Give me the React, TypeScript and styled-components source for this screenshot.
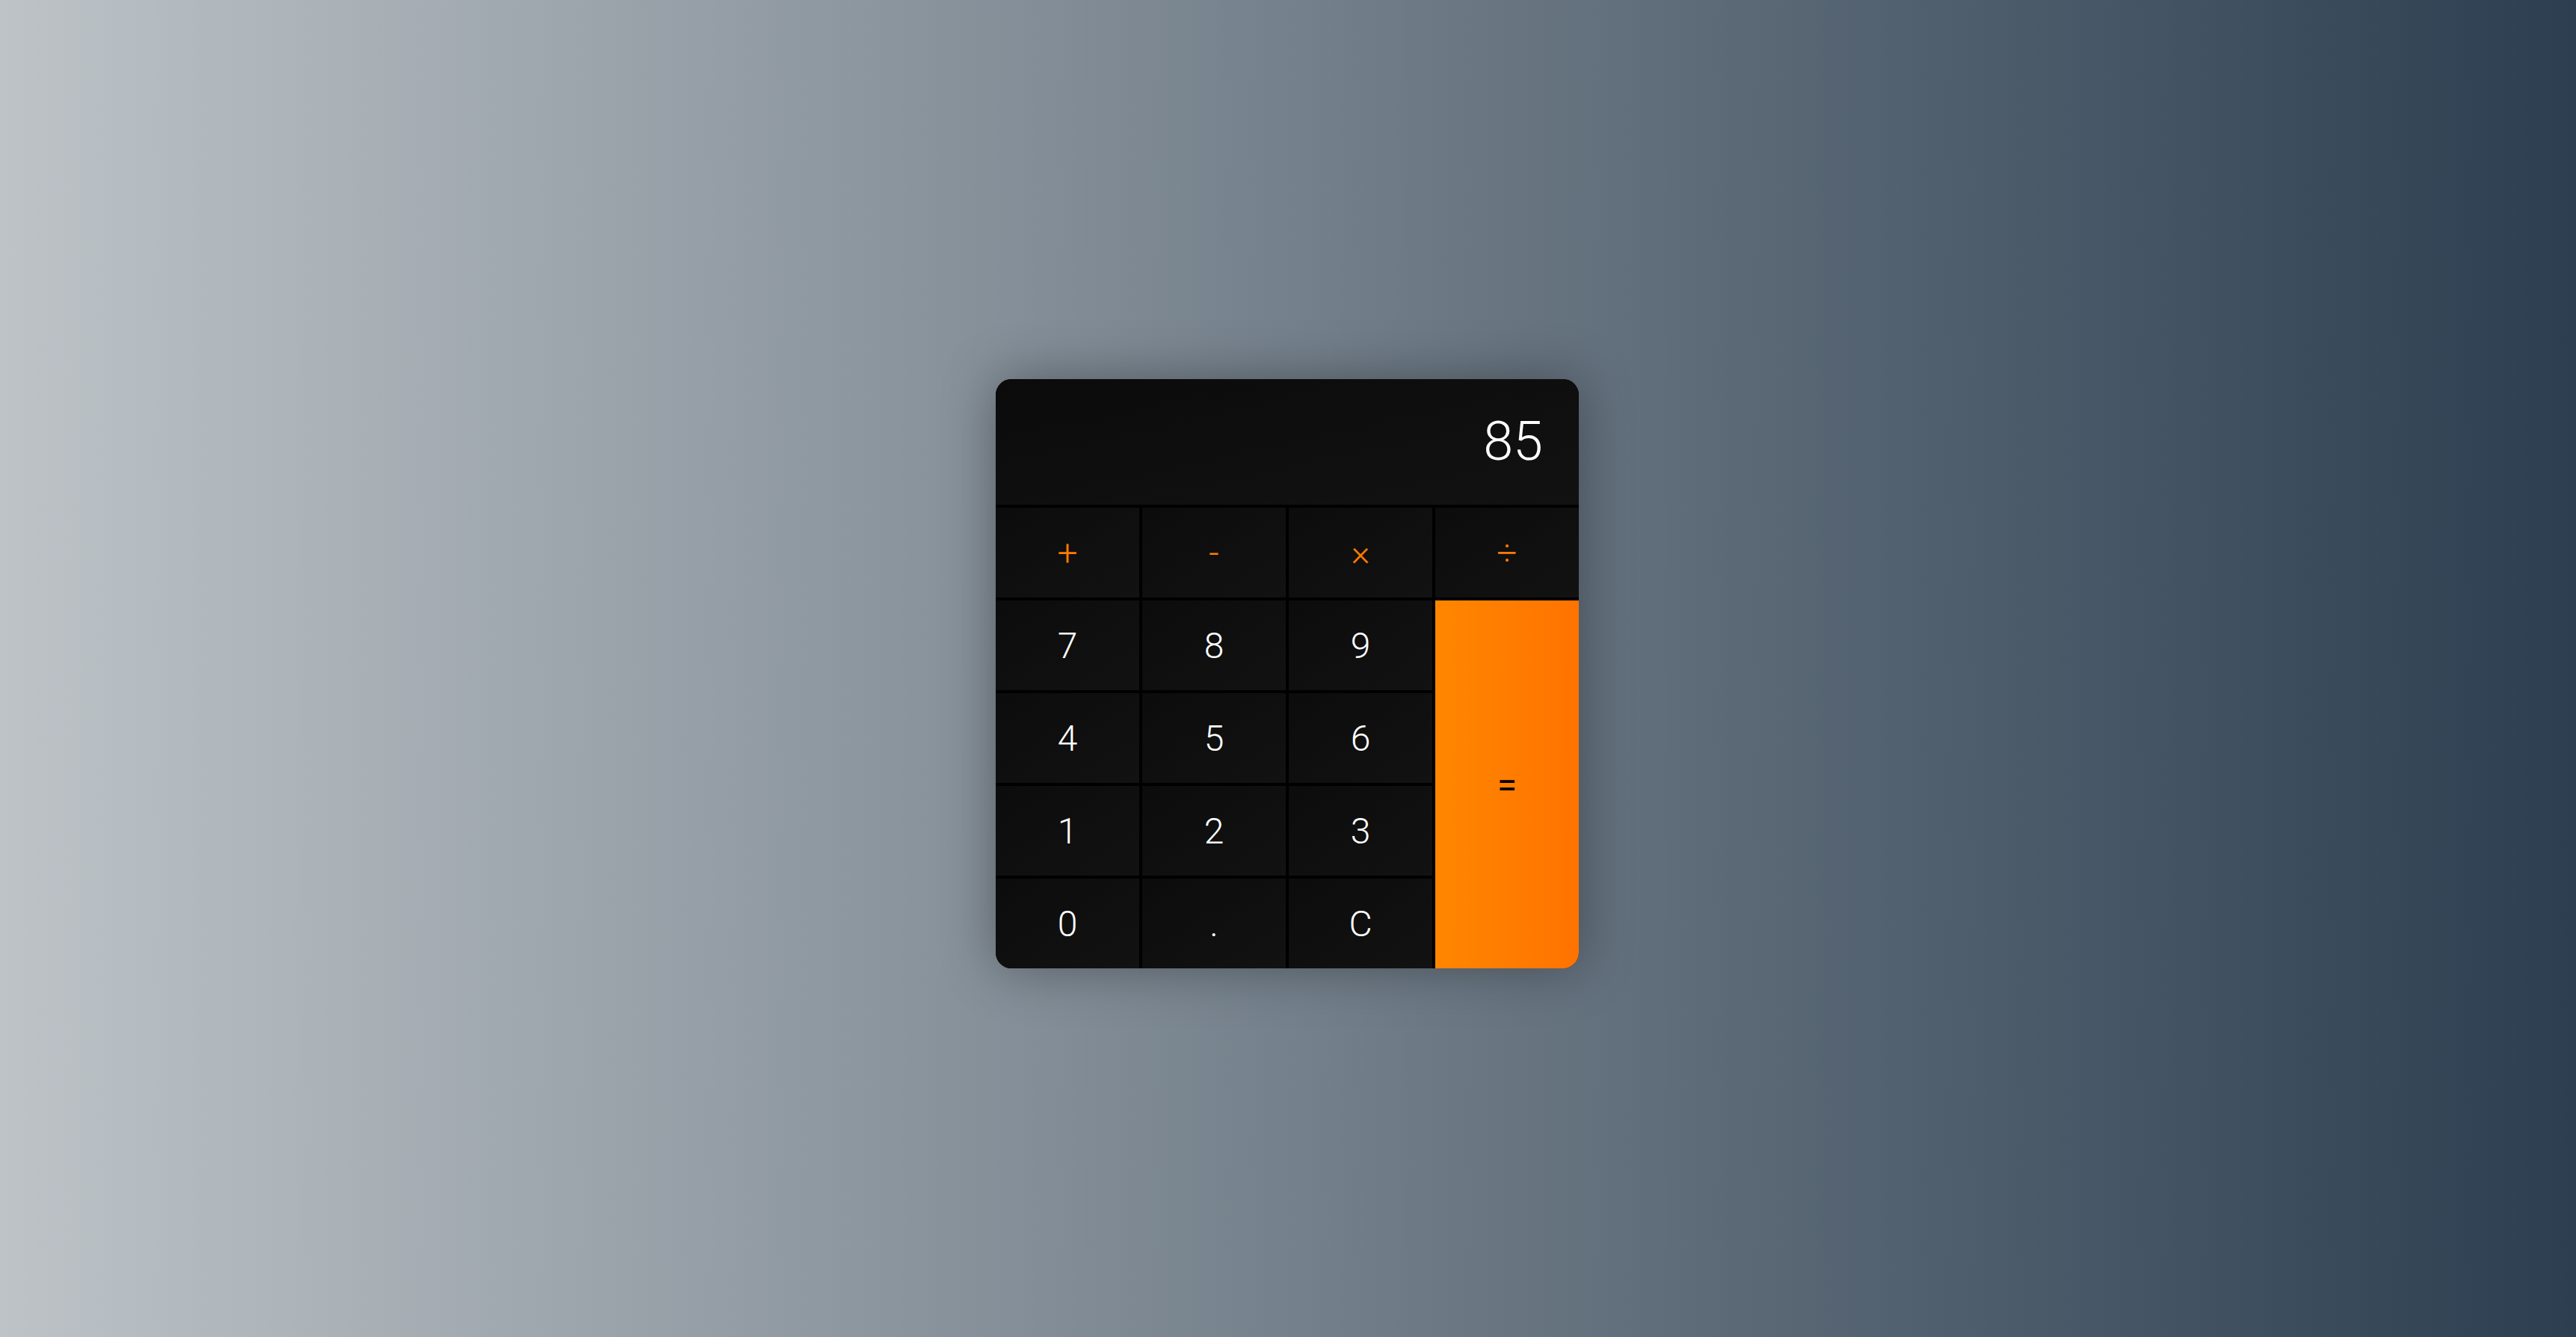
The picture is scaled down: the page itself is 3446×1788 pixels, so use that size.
import styled, { createGlobalStyle } from "styled-components";

const GlobalStyle = createGlobalStyle`
  html, body {
    margin: 0;
    padding: 0;
  }
  body {
    background: linear-gradient(to right, #bdc3c7, #2c3e50);
    font-family: Roboto, "Liberation Sans", sans-serif;
  }
`;

const Page = styled.div`
  box-sizing: border-box;
  height: 100vh;
  padding: 14px 2px 0 0;
  display: flex;
  align-items: center;
  justify-content: center;
`;

const Calculator = styled.div`
  width: 780px;
  display: grid;
  grid-template-columns: repeat(4, 1fr);
  grid-template-rows: 168px repeat(5, 120px);
  gap: 4px;
  background-color: #000;
  border-radius: 21px;
  overflow: hidden;
  box-shadow: 0 0 70px rgba(0, 0, 0, 0.35);
`;

const Display = styled.div`
  grid-column: 1 / -1;
  display: flex;
  align-items: center;
  justify-content: flex-end;
  padding: 0 48px 2px 0;
  background: linear-gradient(to bottom right, #0b0b0b, #121212);
  color: #fff;
  font-size: 72px;
  font-weight: 300;
`;

const Key = styled.button<{ $kind?: "digit" | "op" | "equals" }>`
  border: none;
  margin: 0;
  padding: 0;
  display: flex;
  align-items: center;
  justify-content: center;
  font-family: Roboto, "Liberation Sans", sans-serif;
  font-size: 48px;
  font-weight: 300;
  cursor: pointer;
  color: ${(p) => (p.$kind === "op" ? "#ff7b00" : p.$kind === "equals" ? "#000" : "#fff")};
  background: ${(p) =>
    p.$kind === "equals"
      ? "linear-gradient(to right, #ff8600, #ff7300)"
      : "linear-gradient(to bottom right, #0c0c0c, #121212)"};
  ${(p) => (p.$kind === "equals" ? "grid-column: 4; grid-row: 3 / span 4; font-weight: 400;" : "")}
`;

const ops = ["+", "-", "×", "÷"];
const digits = ["7", "8", "9", "4", "5", "6", "1", "2", "3", "0", ".", "C"];

export default function App() {
  return (
    <>
      <GlobalStyle />
      <Page>
        <Calculator>
          <Display>85</Display>
          {ops.map((o) => (
            <Key key={o} $kind="op">
              {o}
            </Key>
          ))}
          {digits.map((d) => (
            <Key key={d} $kind="digit">
              {d}
            </Key>
          ))}
          <Key $kind="equals">=</Key>
        </Calculator>
      </Page>
    </>
  );
}
